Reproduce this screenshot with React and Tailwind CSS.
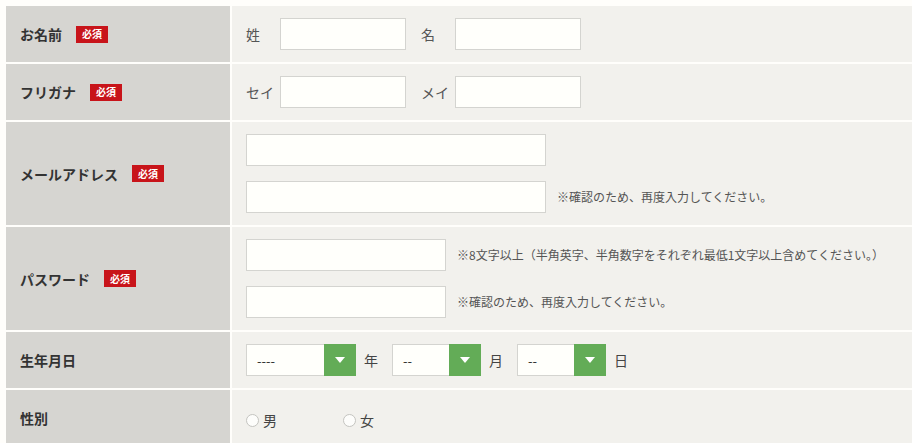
import React from "react";

const FONT = { fontFamily: '"Noto Sans CJK JP", "Noto Sans", sans-serif' };

function Badge() {
  return (
    <span className="ml-[14px] inline-flex h-[17px] w-[32px] items-center justify-center bg-[#c8141a] text-[10px] font-bold leading-none text-white">
      必須
    </span>
  );
}

function Label({ children, required }) {
  return (
    <div className="flex w-[224px] shrink-0 items-center bg-[#d6d5d1] pl-[14px] text-[14px] font-bold leading-none text-[#333]">
      <span>{children}</span>
      {required && <Badge />}
    </div>
  );
}

function Row({ label, required, children }) {
  return (
    <div className="flex gap-[2px]">
      <Label required={required}>{label}</Label>
      <div className="flex-1 bg-[#f2f1ed] py-[12px] pl-[14px]">{children}</div>
    </div>
  );
}

function TextInput({ w }) {
  return (
    <div className={`h-[32px] ${w} shrink-0 border border-[#d4d4d0] bg-[#fffffb]`} />
  );
}

function Note({ children }) {
  return <span className="ml-[11px] text-[12px] leading-none text-[#555]">{children}</span>;
}

function Select({ w, value }) {
  return (
    <div className={`flex h-[32px] ${w} shrink-0 border border-[#d4d4d0] bg-[#fffffb]`}>
      <div className="flex flex-1 items-center pl-[10px] text-[13px] text-[#333]">{value}</div>
      <div className="-my-px -mr-px flex w-[32px] items-center justify-center bg-[#63ac57]">
        <svg width="10" height="6" viewBox="0 0 10 6">
          <path d="M0 0 L10 0 L5 6 Z" fill="#fff" />
        </svg>
      </div>
    </div>
  );
}

function Radio({ label }) {
  return (
    <div className="flex items-center">
      <span className="h-[13px] w-[13px] rounded-full border border-[#c4c4c0] bg-[#fdfdfb]" />
      <span className="ml-[4px] text-[14px] leading-none text-[#444]">{label}</span>
    </div>
  );
}

export default function App() {
  return (
    <div style={FONT} className="min-h-[443px] w-[912px] overflow-hidden bg-[#fffefb] pl-[6px] pt-[6px]">
      <div className="flex flex-col gap-[2px]">
        <Row label="お名前" required>
          <div className="flex items-center text-[14px] leading-none text-[#555]">
            <span className="w-[34px]">姓</span>
            <TextInput w="w-[126px]" />
            <span className="ml-[15px] w-[34px]">名</span>
            <TextInput w="w-[126px]" />
          </div>
        </Row>
        <Row label="フリガナ" required>
          <div className="flex items-center text-[14px] leading-none text-[#555]">
            <span className="w-[34px]">セイ</span>
            <TextInput w="w-[126px]" />
            <span className="ml-[15px] w-[34px]">メイ</span>
            <TextInput w="w-[126px]" />
          </div>
        </Row>
        <Row label="メールアドレス" required>
          <div className="flex flex-col gap-[15px]">
            <div className="flex items-center">
              <TextInput w="w-[300px]" />
            </div>
            <div className="flex items-center">
              <TextInput w="w-[300px]" />
              <Note>※確認のため、再度入力してください。</Note>
            </div>
          </div>
        </Row>
        <Row label="パスワード" required>
          <div className="flex flex-col gap-[15px]">
            <div className="flex items-center">
              <TextInput w="w-[200px]" />
              <Note>※8文字以上（半角英字、半角数字をそれぞれ最低1文字以上含めてください。）</Note>
            </div>
            <div className="flex items-center">
              <TextInput w="w-[200px]" />
              <Note>※確認のため、再度入力してください。</Note>
            </div>
          </div>
        </Row>
        <Row label="生年月日">
          <div className="flex items-center text-[14px] leading-none text-[#444]">
            <Select w="w-[110px]" value="----" />
            <span className="ml-[8px] w-[28px]">年</span>
            <Select w="w-[89px]" value="--" />
            <span className="ml-[8px] w-[28px]">月</span>
            <Select w="w-[89px]" value="--" />
            <span className="ml-[8px]">日</span>
          </div>
        </Row>
        <Row label="性別">
          <div className="flex h-[32px] items-center pt-[4px]">
            <div className="w-[97px]">
              <Radio label="男" />
            </div>
            <Radio label="女" />
          </div>
        </Row>
      </div>
    </div>
  );
}
